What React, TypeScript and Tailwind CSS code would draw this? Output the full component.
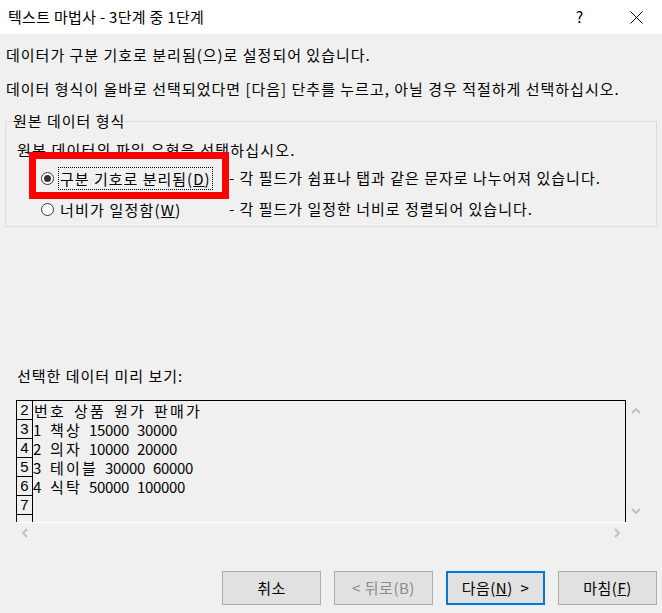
import React from 'react'

const uiFont = { fontFamily: '"Noto Sans CJK KR", "Noto Sans", sans-serif' }

const previewRows = [
  { no: '2', text: '번호 상품 원가 판매가' },
  { no: '3', text: '1 책상 15000 30000' },
  { no: '4', text: '2 의자 10000 20000' },
  { no: '5', text: '3 테이블 30000 60000' },
  { no: '6', text: '4 식탁 50000 100000' },
  { no: '7', text: '' },
  { no: '', text: '' },
]

// fixed-pitch preview: hangul takes two cells, everything else one
function FixedText({ text }: { text: string }) {
  return (
    <>
      {text.split('').map((ch, i) => {
        const wide = ch.charCodeAt(0) >= 0x1100
        return (
          <span
            key={i}
            className={wide ? 'inline-block w-[16px] text-center whitespace-pre' : 'inline-block w-[8px] text-center whitespace-pre'}
          >
            {ch}
          </span>
        )
      })}
    </>
  )
}

function Radio({ checked }: { checked?: boolean }) {
  return (
    <span className="flex h-[13px] w-[13px] shrink-0 items-center justify-center rounded-full border border-[#333333] bg-white">
      {checked && <span className="h-[7px] w-[7px] rounded-full bg-[#333333]" />}
    </span>
  )
}

function Chevron({ dir }: { dir: 'up' | 'down' | 'left' | 'right' }) {
  const pts = {
    up: '1,7 5,3 9,7',
    down: '1,3 5,7 9,3',
    left: '7,1 3,5 7,9',
    right: '3,1 7,5 3,9',
  }[dir]
  return (
    <svg width="10" height="10" viewBox="0 0 10 10">
      <polyline points={pts} fill="none" stroke="#bdbdbd" strokeWidth="1.8" />
    </svg>
  )
}

function DialogButton({
  children,
  primary,
  disabled,
}: {
  children: React.ReactNode
  primary?: boolean
  disabled?: boolean
}) {
  return (
    <button
      className={
        primary
          ? 'flex h-[34px] w-[99px] items-center justify-center border-2 border-[#0078d7] bg-[#e1e1e1] text-[15px] tracking-[0.5px] text-black'
          : disabled
          ? 'flex h-[34px] w-[99px] items-center justify-center border border-[#adadad] bg-[#e1e1e1] text-[15px] tracking-[0.5px] text-[#8a8a8a]'
          : 'flex h-[34px] w-[99px] items-center justify-center border border-[#adadad] bg-[#e1e1e1] text-[15px] tracking-[0.5px] text-black'
      }
    >
      {children}
    </button>
  )
}

export default function App() {
  return (
    <div className="relative h-[613px] w-[662px] overflow-hidden bg-[#f0f0f0] text-black" style={uiFont}>
      {/* Title bar */}
      <div className="flex h-[34px] items-center bg-white pl-[8px]">
        <span className="text-[15px] leading-[20px] tracking-[0.3px]">텍스트 마법사 - 3단계 중 1단계</span>
        <span className="ml-auto mr-[47px] text-[15px] leading-[20px]">?</span>
        <svg width="13" height="13" viewBox="0 0 13 13" className="mr-[19px]">
          <path d="M0.5 0.5 L12.5 12.5 M12.5 0.5 L0.5 12.5" stroke="#000" strokeWidth="1" />
        </svg>
      </div>

      <div className="flex flex-col">
        <p className="mt-[11px] pl-[6px] text-[15px] leading-[20px] tracking-[1px]">
          데이터가 구분 기호로 분리됨(으)로 설정되어 있습니다.
        </p>
        <p className="mt-[14px] pl-[6px] text-[15px] leading-[20px] tracking-[1px]">
          데이터 형식이 올바로 선택되었다면 [다음] 단추를 누르고, 아닐 경우 적절하게 선택하십시오.
        </p>

        {/* Source data type */}
        <fieldset className="mx-[5px] mt-[12px] border border-[#dcdcdc] pb-[5px] pl-[11px] pt-[9px] tracking-[1px]">
          <legend className="-ml-[4px] text-[15px] leading-[20px]">원본 데이터 형식</legend>
          <p className="text-[15px] leading-[20px] tracking-[1.2px]">원본 데이터의 파일 유형을 선택하십시오.</p>
          <div className="mt-[6px] flex h-[24px] items-center pl-[24px] text-[15px]">
            <div className="flex w-[188px] items-center">
              <Radio checked />
              <span className="ml-[4px] border border-dotted border-black px-[1px] leading-[21px]">
                구분 기호로 분리됨(<span className="underline">D</span>)
              </span>
            </div>
            <span>- 각 필드가 쉼표나 탭과 같은 문자로 나누어져 있습니다.</span>
          </div>
          <div className="mt-[7px] flex h-[24px] items-center pl-[24px] text-[15px]">
            <div className="flex w-[188px] items-center">
              <Radio />
              <span className="ml-[4px] px-[2px] leading-[21px] tracking-[1.2px]">
                너비가 일정함(<span className="underline">W</span>)
              </span>
            </div>
            <span>- 각 필드가 일정한 너비로 정렬되어 있습니다.</span>
          </div>
        </fieldset>

        {/* Preview */}
        <p className="mt-[139px] pl-[17px] text-[15px] leading-[20px] tracking-[1px]">선택한 데이터 미리 보기:</p>
        <div className="ml-[16px] mt-[14px] flex w-[630px]">
          <div className="flex w-[610px] flex-col">
            <div className="h-[122px] overflow-hidden border-l border-r border-t border-black">
              {previewRows.map((row, i) => (
                <div key={i} className="flex h-[19px]">
                  <div
                    className="flex w-[16px] shrink-0 items-end justify-center border-b border-r border-black text-[15px] leading-[18px]"
                    style={{ fontFamily: '"Liberation Sans", sans-serif' }}
                  >
                    {row.no}
                  </div>
                  <div className="flex items-center text-[15px] leading-[18px]">
                    <FixedText text={row.text} />
                  </div>
                </div>
              ))}
            </div>
            <div className="flex h-[20px] items-center justify-between border-t border-white px-[4px]">
              <Chevron dir="left" />
              <Chevron dir="right" />
            </div>
          </div>
          <div className="flex h-[122px] w-[20px] flex-col items-center justify-between py-[6px]">
            <Chevron dir="up" />
            <Chevron dir="down" />
          </div>
        </div>

        {/* Buttons */}
        <div className="mt-[29px] flex justify-end gap-[13px] pr-[5px]">
          <DialogButton>취소</DialogButton>
          <DialogButton disabled>&lt; 뒤로(B)</DialogButton>
          <DialogButton primary>
            다음(<span className="underline">N</span>)&nbsp;&nbsp;&gt;
          </DialogButton>
          <DialogButton>
            마침(<span className="underline">F</span>)
          </DialogButton>
        </div>
      </div>

      {/* red highlight annotation */}
      <div className="absolute left-[29px] top-[152px] h-[47px] w-[200px] border-[7px] border-[#ff0000]" />
    </div>
  )
}
